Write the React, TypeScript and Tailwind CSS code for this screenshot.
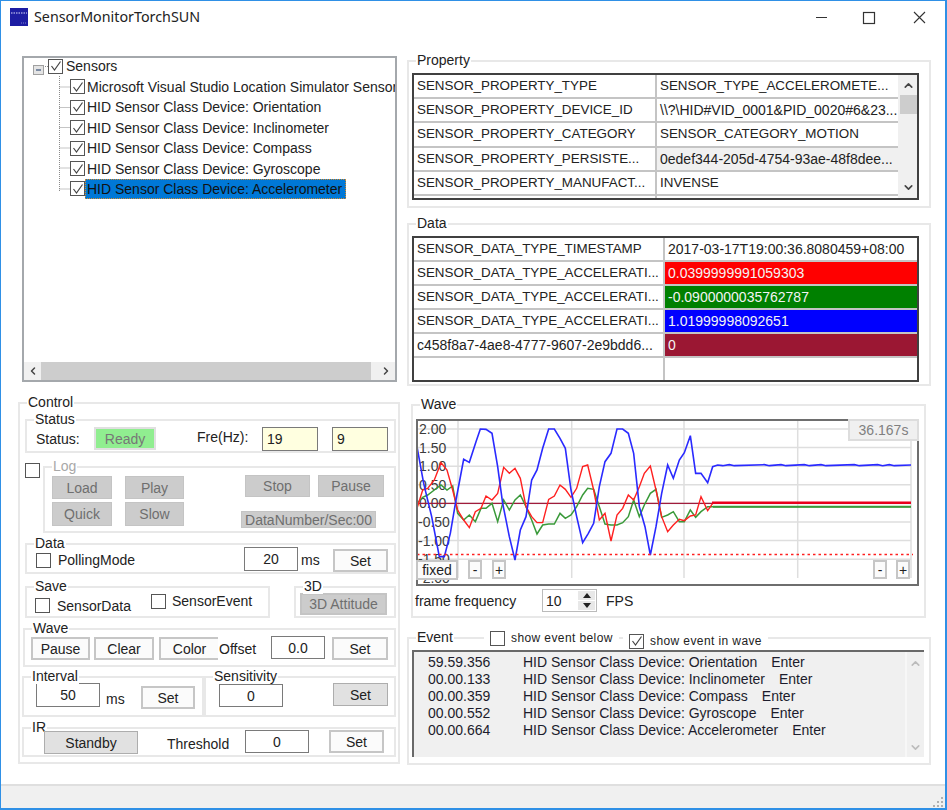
import type { ReactNode } from "react"
import { ChevronDown, ChevronLeft, ChevronRight, ChevronUp } from "lucide-react"

// zoomed trace of the wave traces, x/y in page pixels after toPage()
const toPage = (pts: number[][], ox: number, oy: number) =>
  pts.map(([x, y]) => `${x / 3 + ox},${y / 3 + oy}`).join(" ")

const blueA = [[18,110],[38,220],[62,320],[85,440],[100,440],[118,370],[135,270],[158,148],[175,157],[195,95],[208,57],[225,58],[243,70],[260,170],[275,280],[295,380],[312,450],[328,360],[345,320],[362,210],[378,180],[395,115],[413,57],[430,57],[447,85],[463,115],[480,240],[497,320],[515,398],[532,370],[548,340],[565,230],[582,155],[600,130],[618,57],[635,57],[652,70],[668,130],[685,290],[702,350],[718,435],[735,350],[752,250],[770,165]]
const blueB = [[20,165],[37,205],[55,150],[70,128],[88,77],[104,190],[120,190],[140,218],[155,170],[170,165],[185,167],[205,164],[220,167],[310,164],[325,167],[360,164],[375,167],[430,164],[445,167],[480,164],[495,167],[580,164],[595,167],[650,164],[665,167],[685,164],[700,167],[750,165]]
const redA = [[18,295],[35,240],[50,235],[70,210],[90,158],[108,180],[125,240],[140,300],[158,330],[175,353],[193,305],[210,295],[225,258],[243,270],[260,250],[278,172],[295,190],[312,175],[328,205],[345,290],[362,320],[378,338],[395,338],[413,268],[430,258],[447,225],[463,238],[480,262],[497,235],[515,170],[530,165],[548,240],[565,330],[582,310],[600,393],[618,315],[635,295],[652,255],[668,270],[685,230],[700,190],[718,168],[735,240],[752,320],[770,365]]
const redB = [[20,365],[37,345],[55,328],[70,332],[88,318],[104,315],[120,260],[140,302],[155,280]]
const greenA = [[18,280],[35,262],[50,255],[70,240],[90,225],[108,240],[125,228],[140,310],[158,330],[175,315],[193,335],[210,295],[225,295],[243,280],[260,335],[278,270],[295,300],[312,270],[328,255],[345,290],[362,330],[378,372],[395,345],[413,342],[430,342],[447,310],[463,325],[480,315],[497,290],[515,255],[530,235],[548,238],[565,290],[582,342],[600,345],[618,345],[635,338],[652,320],[668,270],[685,320],[700,285],[718,250],[735,238],[752,322],[770,315]]
const greenB = [[20,315],[37,305],[55,335],[70,335],[88,300],[104,322],[120,305],[140,290],[155,290]]

const gridY = [429, 447.6, 466.2, 484.8, 503.4, 522, 540.6, 559.2]
const gridX = [457, 570.7, 683, 796.7, 910]
const axis = ["2.00", "1.50", "1.00", "0.50", "0.00", "-0.50", "-1.00", "-1.50", "-2.00"]

const sensors = ["Microsoft Visual Studio Location Simulator Sensor", "HID Sensor Class Device: Orientation", "HID Sensor Class Device: Inclinometer", "HID Sensor Class Device: Compass", "HID Sensor Class Device: Gyroscope"]

const properties = [
  ["SENSOR_PROPERTY_TYPE", "SENSOR_TYPE_ACCELEROMETE...", "text-[13.4px]"],
  ["SENSOR_PROPERTY_DEVICE_ID", "\\\\?\\HID#VID_0001&PID_0020#6&23...", ""],
  ["SENSOR_PROPERTY_CATEGORY", "SENSOR_CATEGORY_MOTION", "text-[13.4px]"],
  ["SENSOR_PROPERTY_PERSISTE...", "0edef344-205d-4754-93ae-48f8dee...", "bg-[#f0f0f0]"],
  ["SENSOR_PROPERTY_MANUFACT...", "INVENSE", "text-[13.4px]"],
]

const dataRows = [
  ["SENSOR_DATA_TYPE_TIMESTAMP", "2017-03-17T19:00:36.8080459+08:00", "bg-white text-[#222]"],
  ["SENSOR_DATA_TYPE_ACCELERATI...", "0.0399999991059303", "bg-[#ff0000] text-[#f4f4f4]"],
  ["SENSOR_DATA_TYPE_ACCELERATI...", "-0.0900000035762787", "bg-[#008000] text-[#f4f4f4]"],
  ["SENSOR_DATA_TYPE_ACCELERATI...", "1.01999998092651", "bg-[#0000ff] text-[#f4f4f4]"],
  ["c458f8a7-4ae8-4777-9607-2e9bdd6...", "0", "bg-[#9b1733] text-[#f4f4f4]"],
  ["", "", "bg-white"],
]

const events = [
  ["59.59.356", "HID Sensor Class Device: Orientation"],
  ["00.00.133", "HID Sensor Class Device: Inclinometer"],
  ["00.00.359", "HID Sensor Class Device: Compass"],
  ["00.00.552", "HID Sensor Class Device: Gyroscope"],
  ["00.00.664", "HID Sensor Class Device: Accelerometer"],
]

function Group({ title, className, children, muted }: { title: string; className: string; children?: ReactNode; muted?: boolean }) {
  return (
    <div className={`relative border-2 border-[#e8e8e8] ${className}`}>
      <span className={`absolute -top-[10px] left-[7px] bg-white px-[1px] ${muted ? "text-[#a8a8a8]" : "text-[#222]"}`}>{title}</span>
      {children}
    </div>
  )
}

function Check({ checked, className = "" }: { checked?: boolean; className?: string }) {
  return (
    <span className={`flex h-[15px] w-[15px] shrink-0 items-center justify-center border-[1.5px] border-[#555] bg-white ${className}`}>
      {checked && (
        <svg width="12" height="12" viewBox="0 0 12 12">
          <path d="M1.5 6 L4.5 10 L10.5 1.5" fill="none" stroke="#444" strokeWidth="1.2" />
        </svg>
      )}
    </span>
  )
}

function Btn({ label, className }: { label: string; className: string }) {
  return <span className={`flex shrink-0 items-center justify-center border-2 border-[#c6c6c6] bg-[#fbfbfb] text-[#222] ${className}`}>{label}</span>
}

function GrayBtn({ label, className }: { label: string; className: string }) {
  return <span className={`flex shrink-0 items-center justify-center border border-[#c4c4c4] bg-[#cccccc] text-[#6f6f6f] ${className}`}>{label}</span>
}

function FlatBtn({ label, className }: { label: string; className: string }) {
  return <span className={`flex shrink-0 items-center justify-center border-[1.5px] border-[#adadad] bg-[#e1e1e1] text-[#222] ${className}`}>{label}</span>
}

function Field({ value, className }: { value: string; className: string }) {
  return <span className={`flex shrink-0 items-center justify-center border-[1.5px] border-[#7a7a7a] bg-white text-[#222] ${className}`}>{value}</span>
}

function Chart() {
  return (
    <svg className="absolute inset-0" width="499" height="163" viewBox="417 421 499 163">
      {gridY.map((y) => (
        <line key={y} x1="416" x2="910" y1={y} y2={y} stroke="#dedede" strokeWidth="1.5" />
      ))}
      {gridX.map((x) => (
        <line key={x} x1={x} x2={x} y1="421" y2="578" stroke="#dedede" strokeWidth="1.5" />
      ))}
      {axis.map((t, i) => (
        <text key={t} x={i > 4 ? 417 : 418} y={434 + i * 18.6} fontSize="14" fill="#3c3c3c" fontFamily="Liberation Sans, sans-serif">
          {t}
        </text>
      ))}
      <line x1="416" x2="712" y1="503.4" y2="503.4" stroke="#a01c3c" strokeWidth="1.3" />
      <polyline points={`${toPage(greenA, 410, 410)} ${toPage(greenB, 660, 410)} 910,506.7`} fill="none" stroke="#3a9a3a" strokeWidth="1.5" />
      <line x1="712" x2="910" y1="506.7" y2="506.7" stroke="#3a9a3a" strokeWidth="2" />
      <polyline points={`${toPage(redA, 410, 410)} ${toPage(redB, 660, 410)}`} fill="none" stroke="#ff2020" strokeWidth="1.4" />
      <line x1="711" x2="910" y1="502.8" y2="502.8" stroke="#e8001c" strokeWidth="2.6" />
      <polyline points={`${toPage(blueA, 410, 410)} ${toPage(blueB, 660, 410)}`} fill="none" stroke="#2a2aff" strokeWidth="1.6" />
      <line x1="416" x2="912" y1="554.5" y2="554.5" stroke="#ff2020" strokeWidth="1.5" strokeDasharray="2.5 3" />
    </svg>
  )
}

export default function App() {
  return (
    <div className="flex h-[810px] w-[947px] flex-col overflow-hidden border border-r-2 border-b-2 border-[#2f90e6] bg-white font-['Liberation_Sans',Arial,sans-serif] text-[14px] leading-4 text-[#222]">
      {/* title bar */}
      <div className="flex h-[35px] shrink-0 items-start">
        <svg className="ml-[9px] mt-[7px]" width="18" height="18" viewBox="0 0 18 18">
          <rect width="18" height="18" fill="#1d1da3" />
          <path d="M1 5h16" stroke="#9d9de0" strokeWidth="1.6" strokeDasharray="1.5 1" />
          <path d="M11 15h5" stroke="#8080d0" strokeWidth="1" strokeDasharray="1 1" />
        </svg>
        <span className="ml-[6px] mt-[8px] font-['Noto_Sans',sans-serif] text-[14.3px] text-[#222]">SensorMonitorTorchSUN</span>
        <svg className="ml-auto mr-[19px] mt-[9px]" width="112" height="16" viewBox="0 0 112 16">
          <line x1="2" x2="13" y1="7.5" y2="7.5" stroke="#333" strokeWidth="1" />
          <rect x="49.5" y="2.5" width="11" height="11" fill="none" stroke="#333" strokeWidth="1.2" />
          <path d="M100 2 L111 13 M111 2 L100 13" stroke="#333" strokeWidth="1.1" />
        </svg>
      </div>

      <div className="flex min-h-0 flex-1 items-start">
        {/* left column */}
        <div className="ml-[17px] w-[383px] shrink-0">
          <div className="ml-[4px] mt-[20px] flex h-[326px] w-[375px] flex-col border-2 border-[#a4a8ac]">
            <div className="relative min-h-0 flex-1 overflow-hidden">
              <svg className="absolute left-0 top-0" width="60" height="140" viewBox="0 0 60 140">
                <path d="M35.5 18V133 M19 8.5H24 M35.5 29H46 M35.5 49.5H46 M35.5 69.5H46 M35.5 90H46 M35.5 110H46 M35.5 131H46" stroke="#8a8a8a" strokeWidth="1" strokeDasharray="1 1" fill="none" />
                <rect x="9.5" y="7.5" width="10" height="9" fill="#e4e4e4" stroke="#a0a0a0" />
                <line x1="12" x2="17" y1="12" y2="12" stroke="#34507a" strokeWidth="1.2" />
              </svg>
              <div className="relative flex flex-col">
                <div className="mb-[2.8px] flex h-4 items-center pl-[24px]">
                  <Check checked />
                  <span className="ml-[3px]">Sensors</span>
                </div>
                {sensors.map((s) => (
                  <div key={s} className="flex h-[20.4px] items-center pl-[46px]">
                    <Check checked />
                    <span className="ml-[2px] whitespace-nowrap">{s}</span>
                  </div>
                ))}
                <div className="flex h-[20.4px] items-center pl-[46px]">
                  <Check checked />
                  <span className="mt-[1px] flex h-[20px] w-[261px] items-center border border-dotted border-[#d88a2a] bg-[#0078d7] pl-[1px] text-[#111]">HID Sensor Class Device: Accelerometer</span>
                </div>
              </div>
            </div>
            <div className="flex h-[18px] shrink-0 items-center bg-[#f0f0f0]">
              <ChevronLeft className="ml-[1px] w-[16px] text-[#444]" size={12} strokeWidth={3} />
              <div className="ml-[0px] h-full w-[330px] bg-[#cdcdcd]" />
              <ChevronRight className="ml-auto mr-[1px] w-[16px] text-[#444]" size={12} strokeWidth={3} />
            </div>
          </div>

          <Group title="Control" className="mt-[20px] h-[362px] w-[382px]">
            <Group title="Status" className="ml-[5px] mt-[15px] flex h-[34px] w-[371px] items-start">
              <span className="ml-[9px] mt-[10px] w-[58px]">Status:</span>
              <span className="mt-[6px] flex h-[23px] w-[62px] items-center justify-center border-2 border-[#e0e0e0] bg-[#90ee90] text-[#777]">Ready</span>
              <span className="ml-[41px] mt-[8px] w-[65px]">Fre(Hz):</span>
              <span className="mt-[6px] flex h-[24px] w-[56px] items-center border-[1.5px] border-[#7a7a7a] bg-[#ffffe0] pl-[4px]">19</span>
              <span className="ml-[14px] mt-[6px] flex h-[24px] w-[56px] items-center border-[1.5px] border-[#7a7a7a] bg-[#ffffe0] pl-[4px]">9</span>
            </Group>

            <div className="ml-[5px] mt-[13px] flex items-start">
              <Check className="-mt-[3px]" />
              <Group title="Log" muted className="ml-[3px] flex h-[67px] w-[353px] items-start">
                <div className="ml-[7px] mt-[8px] grid grid-cols-[60px_59px] gap-x-[13px] gap-y-[3px]">
                  <GrayBtn label="Load" className="h-[23px]" />
                  <GrayBtn label="Play" className="h-[23px]" />
                  <GrayBtn label="Quick" className="h-[24px]" />
                  <GrayBtn label="Slow" className="h-[24px]" />
                </div>
                <div className="ml-[61px] mt-[7px] flex flex-col">
                  <div className="flex gap-[8px]">
                    <GrayBtn label="Stop" className="h-[22px] w-[65px]" />
                    <GrayBtn label="Pause" className="h-[22px] w-[66px]" />
                  </div>
                  <GrayBtn label="DataNumber/Sec:00" className="-ml-[4px] mt-[14px] h-[17px] w-[135px]" />
                </div>
              </Group>
            </div>

            <Group title="Data" className="ml-[5px] mt-[10px] flex h-[31px] w-[371px] items-start">
              <Check className="ml-[9px] mt-[8px]" />
              <span className="ml-[7px] mt-[7px]">PollingMode</span>
              <Field value="20" className="ml-auto mt-[2px] h-[24px] w-[54px]" />
              <span className="mt-[7px] w-[35px] pl-[3px]">ms</span>
              <Btn label="Set" className="mr-[6px] mt-[4px] h-[23px] w-[55px]" />
            </Group>

            <div className="ml-[5px] mt-[12px] flex items-start">
              <Group title="Save" className="flex h-[32px] w-[245px] items-start">
                <Check className="ml-[8px] mt-[10px]" />
                <span className="ml-[7px] mt-[10px] w-[94px]">SensorData</span>
                <Check className="mt-[6px]" />
                <span className="ml-[6px] mt-[5px]">SensorEvent</span>
              </Group>
              <Group title="3D" className="ml-[24px] h-[32px] w-[102px]">
                <GrayBtn label="3D Attitude" className="ml-[4px] mt-[5px] h-[22px] w-[87px] border-2 border-[#bdbdbd]" />
              </Group>
            </div>

            <Group title="Wave" className="ml-[3px] mt-[10px] flex h-[39px] w-[373px] items-start">
              <Btn label="Pause" className="ml-[6px] mt-[7px] h-[23px] w-[59px]" />
              <Btn label="Clear" className="ml-[4px] mt-[7px] h-[23px] w-[60px]" />
              <Btn label="Color" className="ml-[5px] mt-[7px] h-[23px] w-[59px] border-r-0" />
              <span className="ml-[1px] mt-[11px] w-[52px]">Offset</span>
              <Field value="0.0" className="mt-[6px] h-[23px] w-[54px]" />
              <Btn label="Set" className="ml-[7px] mt-[7px] h-[23px] w-[56px]" />
            </Group>

            <div className="ml-[2px] mt-[9px] flex items-start">
              <Group title="Interval" className="flex h-[41px] w-[182px] items-start">
                <Field value="50" className="ml-[12px] mt-[5px] h-[24px] w-[64px]" />
                <span className="ml-[6px] mt-[13px] w-[35px]">ms</span>
                <Btn label="Set" className="mt-[8px] h-[23px] w-[54px]" />
              </Group>
              <Group title="Sensitivity" className="flex h-[41px] w-[192px] items-start">
                <Field value="0" className="ml-[13px] mt-[6px] h-[23px] w-[64px]" />
                <FlatBtn label="Set" className="ml-[50px] mt-[5px] h-[23px] w-[55px]" />
              </Group>
            </div>

            <Group title="IR" className="ml-[2px] mt-[10px] flex h-[30px] w-[374px] items-start">
              <FlatBtn label="Standby" className="relative ml-[20px] mt-[2px] h-[23px] w-[94px]" />
              <span className="ml-[29px] mt-[7px] w-[78px]">Threshold</span>
              <Field value="0" className="mt-[1px] h-[23px] w-[64px]" />
              <Btn label="Set" className="ml-[20px] mt-[1px] h-[23px] w-[55px]" />
            </Group>
          </Group>
        </div>

        {/* right column */}
        <div className="ml-[6px] w-[524px] shrink-0">
          <Group title="Property" className="mt-[24px] h-[148px] w-[524px]">
            <div className="ml-[3px] mt-[11px] flex h-[127px] w-[507px] overflow-hidden border-2 border-[#404040]">
              <div className="w-[484px] shrink-0">
                {properties.map(([k, v, cls]) => (
                  <div key={k} className="flex h-[24.2px] items-center border-b-2 border-[#c4c4c4]">
                    <span className="w-[241px] shrink-0 whitespace-nowrap pl-[3px] text-[13.4px]">{k}</span>
                    <span className={`flex h-full flex-1 items-center whitespace-nowrap border-l-2 border-[#c4c4c4] pl-[3px] ${cls}`}>{v}</span>
                  </div>
                ))}
                <div className="flex h-[8px]">
                  <span className="w-[241px] shrink-0" />
                  <span className="flex-1 border-l-2 border-[#c4c4c4]" />
                </div>
              </div>
              <div className="flex flex-1 flex-col items-center bg-[#f0f0f0] pl-[2px]">
                <ChevronUp className="mt-[4px] text-[#444]" size={13} strokeWidth={3} />
                <div className="mt-[3px] h-[19px] w-full bg-[#cdcdcd]" />
                <ChevronDown className="mb-[4px] mt-auto text-[#444]" size={13} strokeWidth={3} />
              </div>
            </div>
          </Group>

          <Group title="Data" className="mt-[15px] h-[163px] w-[524px]">
            <div className="ml-[3px] mt-[11px] h-[146px] w-[507px] overflow-hidden border-2 border-[#404040]">
              {dataRows.map(([k, v, cls], i) => (
                <div key={i} className="flex h-[24px] items-center border-b-2 border-[#c4c4c4]">
                  <span className={`w-[249px] shrink-0 whitespace-nowrap pl-[3px] ${i === 4 ? "" : "text-[13.4px]"}`}>{k}</span>
                  <span className={`flex h-full flex-1 items-center whitespace-nowrap border-l-2 border-[#c4c4c4] pl-[3px] ${cls}`}>{v}</span>
                </div>
              ))}
            </div>
          </Group>

          <Group title="Wave" className="ml-[4px] mt-[18px] h-[214px] w-[515px]">
            <div className="relative ml-[3px] mt-[13px] h-[167px] w-[503px] border-2 border-[#6e6e6e] bg-white">
              <Chart />
              <span className="absolute -right-[2px] -top-[2px] flex h-[22px] w-[71px] items-center justify-center border-2 border-[#dddddd] bg-[#f0f0f0] text-[#808080]">36.167s</span>
              <Btn label="fixed" className="absolute left-[-2px] top-[139px] h-[20px] w-[42px] bg-[#f2f2f2]" />
              <Btn label="-" className="absolute left-[50px] top-[139px] h-[19px] w-[14px] bg-[#f2f2f2]" />
              <Btn label="+" className="absolute left-[74px] top-[139px] h-[19px] w-[14px] bg-[#f2f2f2]" />
              <Btn label="-" className="absolute left-[455px] top-[139px] h-[19px] w-[14px] bg-[#f2f2f2]" />
              <Btn label="+" className="absolute left-[478px] top-[139px] h-[19px] w-[14px] bg-[#f2f2f2]" />
            </div>
            <div className="ml-[2px] mt-[3px] flex items-start">
              <span className="mt-[4px] w-[127px]">frame frequency</span>
              <div className="flex h-[23px] w-[55px] items-center border-[1.5px] border-[#bbbbbb] pl-[3px]">
                <span>10</span>
                <div className="ml-auto mr-[1px] flex h-full w-[17px] flex-col gap-[1px] py-[1px]">
                  <span className="flex flex-1 items-center justify-center bg-[#e8e8e8]">
                    <svg width="8" height="5" viewBox="0 0 8 5"><path d="M4 0 L8 5 H0 Z" fill="#222" /></svg>
                  </span>
                  <span className="flex flex-1 items-center justify-center bg-[#e8e8e8]">
                    <svg width="8" height="5" viewBox="0 0 8 5"><path d="M0 0 H8 L4 5 Z" fill="#222" /></svg>
                  </span>
                </div>
              </div>
              <span className="ml-[9px] mt-[4px]">FPS</span>
            </div>
          </Group>

          <Group title="Event" className="mt-[19px] h-[128px] w-[524px]">
            <div className="absolute -top-[8px] left-[75px] flex items-center bg-white px-[6px] text-[12px] tracking-[0.4px]">
              <Check className="-mt-[1px]" />
              <span className="ml-[6px] -mt-[1px]">show event below</span>
            </div>
            <div className="absolute -top-[6px] left-[214px] flex items-center bg-white px-[6px] text-[12px] tracking-[0.4px]">
              <Check checked />
              <span className="ml-[6px]">show event in wave</span>
            </div>
            <div className="ml-[3px] mt-[11px] flex h-[107px] w-[512px] border-l-2 border-t-2 border-[#696969] bg-[#f0f0f0]">
              <div className="flex-1 pt-[1px]">
                {events.map(([t, n]) => (
                  <div key={t} className="flex h-[17px] items-center whitespace-nowrap text-[#1c1c2c]">
                    <span className="ml-[14px] w-[95px] shrink-0">{t}</span>
                    <span>{n}</span>
                    <span className="ml-[14px]">Enter</span>
                  </div>
                ))}
              </div>
              <div className="flex w-[19px] flex-col items-center border-l-2 border-[#f7f7f7]">
                <ChevronUp className="mt-[5px] text-[#bcbcbc]" size={13} strokeWidth={3} />
                <ChevronDown className="mb-[3px] mt-auto text-[#bcbcbc]" size={13} strokeWidth={3} />
              </div>
            </div>
          </Group>
        </div>
      </div>

      {/* status bar */}
      <div className="relative h-[24px] shrink-0 border-t-2 border-[#dfdfdf] bg-[#f0f0f0]">
        <svg className="absolute bottom-[1px] right-[1px]" width="12" height="12" viewBox="0 0 12 12">
          <path d="M9 2h2v2H9z M5 6h2v2H5z M9 6h2v2H9z M1 10h2v2H1z M5 10h2v2H5z M9 10h2v2H9z" fill="#b0b0b0" />
        </svg>
      </div>
    </div>
  )
}
